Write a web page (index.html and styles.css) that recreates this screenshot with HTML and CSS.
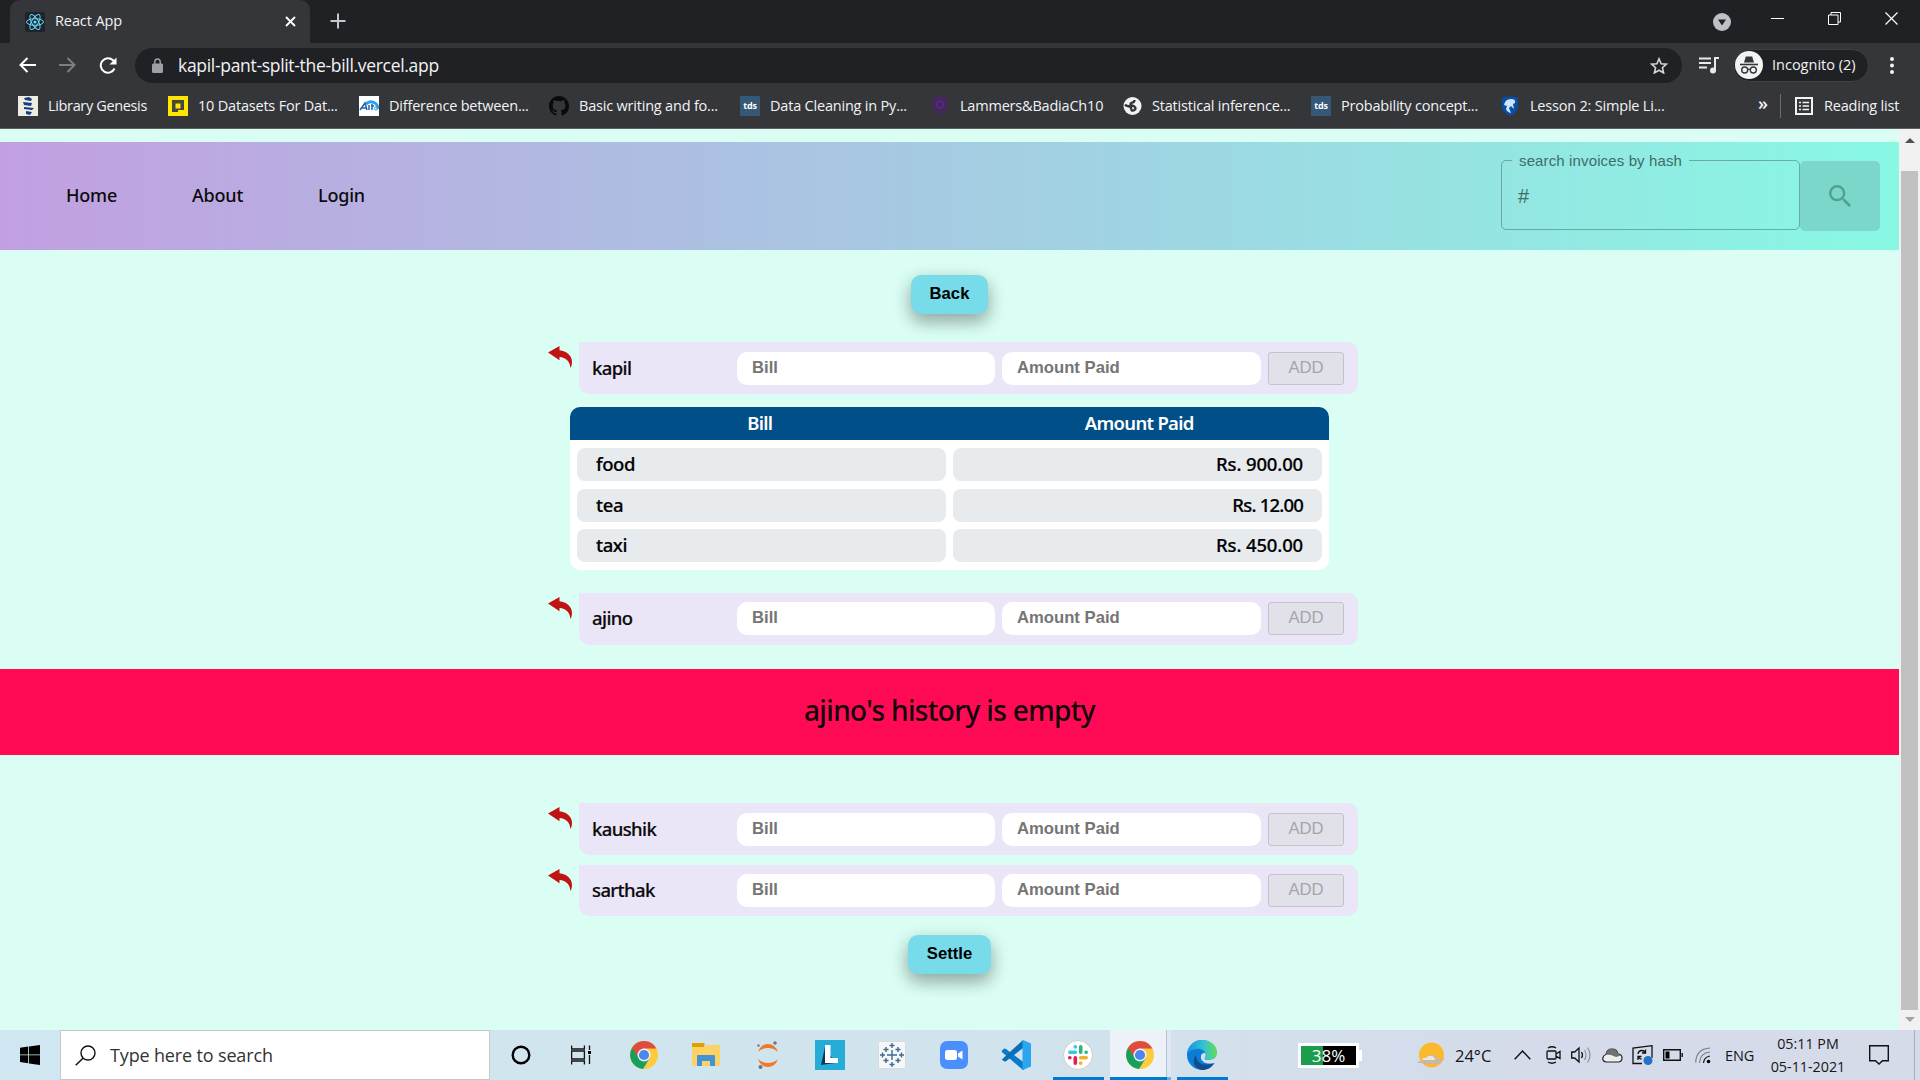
FILE: index.html
```html
<!DOCTYPE html>
<html lang="en">
<head>
<meta charset="utf-8">
<title>React App</title>
<link rel="stylesheet" href="styles.css">
</head>
<body>
<svg class="defs" width="0" height="0">
  <defs>
    <symbol id="reply" viewBox="0 0 24 22"><path fill="#c01313" d="M0 6.500 11.500 0v4.200C18.500 5 24 9.500 24 16c0 2.500-.6 4.500-1.600 6C22 15.500 18 11.500 11.500 11v3.200z"/></symbol>
    <symbol id="chrome" viewBox="0 0 28 28"><circle cx="14" cy="14" r="14" fill="#fdcb3d"/><path fill="#17a05b" d="M1.900 7A14 14 0 0 0 13 27.960L19.600 17.200 14 14z"/><path fill="#de4b40" d="M14 7.500h12.400A14 14 0 0 0 1.900 7l6.300 9z"/><circle cx="14" cy="14" r="6.500" fill="#f5f5f5"/><circle cx="14" cy="14" r="5.100" fill="#4a88f0"/></symbol>
  </defs>
</svg>
<div class="browser">
  <header class="tabs">
    <div class="tab">
      <svg class="favicon" width="20" height="20" viewBox="0 0 20 20"><rect width="20" height="20" rx="2" fill="#20232a"/><g fill="none" stroke="#61dafb" stroke-width="1"><ellipse cx="10" cy="10" rx="8.500" ry="3.300"/><ellipse cx="10" cy="10" rx="8.500" ry="3.300" transform="rotate(60 10 10)"/><ellipse cx="10" cy="10" rx="8.500" ry="3.300" transform="rotate(120 10 10)"/></g><circle cx="10" cy="10" r="1.600" fill="#61dafb"/></svg>
      <span class="tab-title">React App</span>
      <svg width="11" height="11" viewBox="0 0 11 11"><path d="M1 1l9 9M10 1l-9 9" stroke="#fff" stroke-width="1.800"/></svg>
    </div>
    <svg class="new-tab" width="16" height="16" viewBox="0 0 16 16"><path d="M8 .5v15M.5 8h15" stroke="#c4c7cb" stroke-width="2"/></svg>
    <div class="window-controls">
      <svg width="18" height="18" viewBox="0 0 18 18"><circle cx="9" cy="9" r="9" fill="#bdc1c6"/><path d="M5 6.500h8L9 12.500z" fill="#202124"/></svg>
      <svg width="13" height="13" viewBox="0 0 13 13"><path d="M0 6.500h13" stroke="#fff"/></svg>
      <svg width="13" height="13" viewBox="0 0 13 13"><path d="M.5 3h9.500v9.500H.5zM3 3V.5h9.500V10H10" stroke="#fff" fill="none"/></svg>
      <svg width="13" height="13" viewBox="0 0 13 13"><path d="M.5.5l12 12M12.500.5l-12 12" stroke="#fff" stroke-width="1.200"/></svg>
    </div>
  </header>
  <div class="toolbar">
    <svg width="17" height="16" viewBox="0 0 17 16"><path d="M17 8H1.500M8.500 1 1.500 8l7 7" stroke="#fff" stroke-width="2" fill="none"/></svg>
    <svg width="17" height="16" viewBox="0 0 17 16"><path d="M0 8h15.500M8.500 1l7 7-7 7" stroke="#7d7e82" stroke-width="2" fill="none"/></svg>
    <svg width="18" height="17" viewBox="0 0 18 17"><path d="M15.500 11.500A7.200 7.200 0 1 1 14 3.300l2 2" stroke="#fff" stroke-width="2" fill="none"/><path d="M17.500.5v7h-7z" fill="#fff"/></svg>
    <div class="omnibox">
      <svg width="11" height="15" viewBox="0 0 12 15" preserveAspectRatio="none"><path d="M3 6V4a3 3 0 0 1 6 0v2" stroke="#9aa0a6" stroke-width="1.600" fill="none"/><rect y="5.500" width="12" height="9.500" rx="1.500" fill="#9aa0a6"/></svg>
      <span class="url">kapil-pant-split-the-bill.vercel.app</span>
      <svg class="star" width="18" height="17" viewBox="0 0 18 17"><path d="M9 1.800l2.100 4.900 5.300.5-4 3.500 1.200 5.200L9 13.200l-4.600 2.700 1.200-5.200-4-3.500 5.300-.5z" stroke="#d5d7da" stroke-width="1.600" fill="none"/></svg>
    </div>
    <svg class="media" width="20" height="19" viewBox="0 0 20 19"><path d="M0 2.500h12M0 7h12M0 11.500h8M16 14V2h4" stroke="#e8eaed" stroke-width="2" fill="none"/><circle cx="14" cy="14.500" r="3" fill="#e8eaed"/></svg>
    <div class="incognito">
      <svg width="28" height="28" viewBox="0 0 28 28"><circle cx="14" cy="14" r="14" fill="#f1f3f4"/><path d="M9 11.500 10.800 5.500h6.400l1.800 6z" fill="#35363a"/><path d="M5 13.500h18" stroke="#35363a" stroke-width="1.600"/><g fill="none" stroke="#35363a" stroke-width="1.400"><circle cx="9.700" cy="19" r="3"/><circle cx="18.300" cy="19" r="3"/><path d="M12.700 18.500q1.300-.8 2.600 0"/></g></svg>
      <span class="incognito-text">Incognito (2)</span>
    </div>
    <svg class="dots" width="4" height="17" viewBox="0 0 4 17"><g fill="#f1f3f4"><circle cx="2" cy="2" r="2"/><circle cx="2" cy="8.500" r="2"/><circle cx="2" cy="15" r="2"/></g></svg>
  </div>
  <nav class="bookmarks">
    <a class="bookmark"><svg width="20" height="20" viewBox="0 0 20 20"><rect width="20" height="20" fill="#eeeee0"/><path d="M6 2l5-1 3 2-1 2-6-1zM5 6l9 1-1 3-7-1zM6 11l10 1-2 2-8-1zM8 15l6 1-2 3-4-1z" fill="#153b83"/></svg><span class="first-title">Library Genesis</span></a>
    <a class="bookmark"><svg width="20" height="20" viewBox="0 0 20 20"><rect width="20" height="20" fill="#ffe600"/><path d="M4 4h12v10h-6v2H4z" fill="#46473c"/><rect x="7.500" y="7.500" width="5" height="5" fill="#ffe600"/></svg><span>10 Datasets For Dat...</span></a>
    <a class="bookmark"><svg width="20" height="20" viewBox="0 0 20 20"><rect width="20" height="20" fill="#fff"/><path d="M7 8a7 7 0 0 1 12 5" stroke="#2b9ff0" stroke-width="3" fill="none"/><path d="M1 14l5-7 2 7M3 12h4M10 9v5M13 8v6M12 10h3" stroke="#1c65ad" stroke-width="1.500" fill="none"/><circle cx="17" cy="12.500" r="1.600" fill="none" stroke="#2b9ff0"/></svg><span>Difference between...</span></a>
    <a class="bookmark"><svg width="20" height="20" viewBox="0 0 16 16"><path fill="#0a0a0b" d="M8 0C3.580 0 0 3.580 0 8c0 3.540 2.290 6.530 5.470 7.590.4.070.55-.17.55-.38v-1.490c-2.010.37-2.530-.49-2.690-.94-.09-.23-.48-.94-.82-1.130-.28-.15-.68-.52-.01-.53.63-.01 1.080.58 1.230.82.72 1.210 1.870.87 2.330.66.07-.52.28-.87.51-1.070-1.780-.2-3.640-.89-3.640-3.950 0-.87.31-1.590.82-2.150-.08-.2-.36-1.020.08-2.120 0 0 .67-.21 2.200.82a7.600 7.600 0 0 1 4 0c1.530-1.040 2.200-.82 2.200-.82.44 1.100.16 1.920.08 2.120.51.56.82 1.270.82 2.150 0 3.070-1.870 3.750-3.650 3.950.29.25.54.73.54 1.480v2.200c0 .21.15.46.55.38A8 8 0 0 0 16 8c0-4.420-3.580-8-8-8z"/></svg><span>Basic writing and fo...</span></a>
    <a class="bookmark"><i class="tds">tds</i><span>Data Cleaning in Py...</span></a>
    <a class="bookmark"><svg width="20" height="20" viewBox="0 0 20 20"><path d="M3 1.500l3.500-1L10 1.500l3.500-1 3.500 1v10l-1.500 4L10 19.500l-5.500-4-1.500-4z" fill="#452663"/><circle cx="10" cy="8.500" r="3.500" fill="none" stroke="#5d2a80" stroke-width="1.500"/><path d="M4 13l6 4 6-4" fill="none" stroke="#38343f"/></svg><span>Lammers&amp;BadiaCh10</span></a>
    <a class="bookmark"><svg width="20" height="20" viewBox="0 0 20 20"><circle cx="10.500" cy="10" r="9" fill="#f1f3f4"/><path d="M3 8.500c2 2.500 4 1.200 5.500 2.500s0 3 1.500 3.500 4.500-1 3-3.300-5-1.200-4.500-3.200 4-.5 4-4" fill="none" stroke="#35363a" stroke-width="2.400"/></svg><span>Statistical inference...</span></a>
    <a class="bookmark"><i class="tds">tds</i><span>Probability concept...</span></a>
    <a class="bookmark"><svg width="20" height="20" viewBox="0 0 20 20"><path d="M2 1.500q8-2 16 0V12q-2 5-8 8-6-3-8-8z" fill="#0a4ea2"/><path d="M4 9q1-6 7-6 5 0 4 4l-2 1 1 5-3-3-2 2 2 5q-4-1-5-4l1-3z" fill="#cfe5fb"/></svg><span>Lesson 2: Simple Li...</span></a>
    <span class="more">»</span>
    <a class="reading"><svg width="18" height="18" viewBox="0 0 18 18"><rect x="1" y="1" width="16" height="16" fill="none" stroke="#f1f3f4" stroke-width="2"/><path d="M4 5.500h2M4 9h2M4 12.500h2M7.500 5.500H14M7.500 9H14M7.500 12.500H14" stroke="#f1f3f4" stroke-width="1.600"/></svg><span>Reading list</span></a>
  </nav>
</div>
<div class="viewport">
  <main class="page">
    <nav class="site-nav">
      <a>Home</a><a class="about">About</a><a>Login</a>
      <form class="search">
        <fieldset class="field"><legend><span>search invoices by hash</span></legend><span class="hash">#</span></fieldset>
        <div class="search-btn"><svg width="22" height="22" viewBox="3 3 17.500 17.500"><path fill="#539f93" d="M15.500 14h-.79l-.28-.27A6.470 6.470 0 0 0 16 9.500 6.500 6.500 0 1 0 9.500 16c1.610 0 3.090-.59 4.230-1.570l.27.28v.79l5 4.990L20.490 19l-4.990-5zm-6 0C7.010 14 5 11.990 5 9.500S7.010 5 9.500 5 14 7.010 14 9.500 11.990 14 9.500 14z"/></svg></div>
      </form>
    </nav>
    <div class="action back">Back</div>
    <section class="person first"><svg class="reply" width="24" height="22"><use href="#reply"/></svg><div class="row"><span class="name">kapil</span><div class="input">Bill</div><div class="input">Amount Paid</div><div class="add">ADD</div></div></section>
    <section class="history">
      <div class="head"><span>Bill</span><span>Amount Paid</span></div>
      <div class="cells">
        <div class="cell">food</div><div class="cell amount">Rs. 900.00</div>
        <div class="cell">tea</div><div class="cell amount narrow">Rs. 12.00</div>
        <div class="cell">taxi</div><div class="cell amount">Rs. 450.00</div>
      </div>
    </section>
    <section class="person second"><svg class="reply" width="24" height="22"><use href="#reply"/></svg><div class="row"><span class="name">ajino</span><div class="input">Bill</div><div class="input">Amount Paid</div><div class="add">ADD</div></div></section>
    <div class="banner">ajino's history is empty</div>
    <section class="person third"><svg class="reply" width="24" height="22"><use href="#reply"/></svg><div class="row"><span class="name">kaushik</span><div class="input">Bill</div><div class="input">Amount Paid</div><div class="add">ADD</div></div></section>
    <section class="person fourth"><svg class="reply" width="24" height="22"><use href="#reply"/></svg><div class="row"><span class="name">sarthak</span><div class="input">Bill</div><div class="input">Amount Paid</div><div class="add">ADD</div></div></section>
    <div class="action settle">Settle</div>
  </main>
  <div class="scrollbar"><i class="up"></i><i class="thumb"></i><i class="down"></i></div>
</div>
<footer class="taskbar">
  <div class="start"><svg width="20" height="20" viewBox="0 0 20 20"><path d="M0 2.800 8.200 1.600v7.900H0zM9 1.500 20 0v9.500H9zM0 10.300h8.200v8L0 17.100zM9 10.300h11V20L9 18.400z"/></svg></div>
  <div class="task-search"><svg width="21" height="21" viewBox="0 0 21 21"><circle cx="13" cy="8" r="7" fill="none" stroke="#111" stroke-width="1.400"/><path d="M8.200 13 .7 20.300" stroke="#111" stroke-width="1.500"/></svg><span>Type here to search</span></div>
  <div class="apps">
    <div class="app"><svg width="20" height="20"><circle cx="10" cy="10" r="8.300" fill="none" stroke="#000" stroke-width="2.400"/></svg></div>
    <div class="app task-view"><svg width="20" height="20" viewBox="0 0 20 20"><path d="M.6.500V4h12.800V.5M.6 19.500V16h12.800v3.500M.6 6h12.800v8H.6zM18.500.5V5M18.500 10v9" fill="none" stroke="#111" stroke-width="1.300"/><path d="M17 6h3v3h-3z"/></svg></div>
    <div class="app"><svg width="28" height="28"><use href="#chrome"/></svg></div>
    <div class="app"><svg width="28" height="24" viewBox="0 0 28 24"><path d="M0 0h12l1 2h-1l1 3H0z" fill="#e0a000"/><path d="M0 4h12l2-2h14v21H0z" fill="#fdd264"/><path d="M5 23V13q0-1 1-1h16q1 0 1 1v10h-5v-5h-8v5z" fill="#4193d6"/></svg></div>
    <div class="app"><svg width="22" height="28" viewBox="0 0 22 28"><path d="M1 11q3-8 10-8t10 8q-4-4-10-4T1 11zM1 18q3 8 10 8t10-8q-4 4-10 4T1 18z" fill="#f37726"/><g fill="#767677"><circle cx="1.500" cy="4.500" r="1.200"/><circle cx="18" cy="2" r="1.800"/><circle cx="3.500" cy="26" r="2"/></g></svg></div>
    <div class="app"><svg width="30" height="30" viewBox="0 0 30 30"><path fill="#25acd7" d="M0 0h30v30H0z"/><path fill="#0e3958" d="M10 7 6 25l14-2z"/><path fill="#fff" d="M10 5h5.500v13H23v5H10z"/></svg></div>
    <div class="app"><svg width="28" height="28" viewBox="0 0 28 28"><path fill="#f7f7f7" stroke="#d7dade" d="M.5.500h27v27H.5z"/><path d="M14 9v10M9 14h10M14 2v5M11.500 4.500h5M14 21v5M11.500 23.500h5M4.500 11.500v5M2 14h5M23.500 11.500v5M21 14h5M8 6v5M5.500 8.500h5M20 6v5M17.500 8.500h5M8 17v5M5.500 19.500h5M20 17v5M17.500 19.500h5" stroke="#3a6c96" stroke-width="1.400"/></svg></div>
    <div class="app"><svg width="28" height="28" viewBox="0 0 28 28"><rect width="28" height="28" rx="7" fill="#4b8ffd"/><rect x="5" y="9" width="12" height="10" rx="2.500" fill="#fff"/><path d="M18 12.500 22.500 9.500v9L18 15.500z" fill="#fff"/></svg></div>
    <div class="app"><svg width="30" height="30" viewBox="0 0 30 30"><path d="M.8 10.500 3 8.700q1-.6 2 .2L23 22.500V30h-1L.8 12z" fill="#0b7bc9"/><path d="M.8 19.500 22 0v8L5 21.200q-1 .7-2 0L.8 19.500z" fill="#0a6fb8"/><path d="M22 0l8 3.500v23L22 30q-.500 0-.500-1V1q0-1 .500-1z" fill="#2aa5ef"/></svg></div>
    <div class="app open"><svg width="30" height="30" viewBox="0 0 30 30"><circle cx="15" cy="15" r="14.500" fill="#fff" stroke="#ccc"/><g stroke-width="3.600" stroke-linecap="round"><path d="M12.300 6.800v.1M6.800 12.300h5.500" stroke="#36c5f0"/><path d="M17.700 6.800v5.500M23.200 12.300h-.1" stroke="#2eb67d"/><path d="M17.700 17.700h5.500M17.700 23.200v-.1" stroke="#ecb22e"/><path d="M12.300 17.700v5.500M6.800 17.700h.1" stroke="#e01e5a"/></g></svg></div>
    <div class="app open active"><svg width="28" height="28"><use href="#chrome"/></svg></div>
    <div class="app open"><svg width="30" height="30" viewBox="0 0 30 30"><defs><linearGradient id="e1" x2="1"><stop stop-color="#1595dd"/><stop offset=".55" stop-color="#35c1d5"/><stop offset="1" stop-color="#65dc58"/></linearGradient></defs><circle cx="15" cy="15" r="15" fill="#0b7dd6"/><path d="M0 14C1 5 8 0 15 0c9 0 15 6 15 12 0 5-4 8-9 8-3 0-4-1-3-3 2-5-3-9-8-8-5 0-9 3-10 5z" fill="url(#e1)"/><path d="M9 15c0 8 7 12 18 8-3 5-7 7-12 7C8 29 4 22 9 15z" fill="#134b8c"/><path d="M30 13v12l-3-2c-7 2-14-1-13-7 0-2 2-3 3-3 2 0 2 2 1 4-1 3 1 3 3 3 5 0 8-2 9-7z" fill="#d3e1ed"/></svg></div>
  </div>
  <div class="battery-meter"><span>38%</span></div>
  <div class="weather"><svg width="30" height="26" viewBox="0 0 30 26"><circle cx="15.500" cy="13" r="12.500" fill="#fbb92c"/><path d="M1 21q1-2 5-2 1-4 5-4 2-3 6-2 4 0 5 4h7q-2 2-6 2l3 2q-7 2-12 1-5 1-8-1z" fill="#c9b7a6"/><path d="M6 18q1-3 4-2 2-3 6-2 3 1 3 4z" fill="#eee6dd"/></svg><span class="temp">24°C</span></div>
  <div class="tray">
    <svg width="17" height="10" viewBox="0 0 17 10"><path d="M.7 9.200 8.500 1l7.800 8.200" fill="none" stroke="#111" stroke-width="1.400"/></svg>
    <svg width="16" height="18" viewBox="0 0 16 18"><path d="M2 2q4-2.500 8 0M2 16q4 2.500 8 0M1 6q0-1 1-1h7q1 0 1 1v6q0 1-1 1H2q-1 0-1-1zM10 8l4-2.500v7L10 10" fill="none" stroke="#111" stroke-width="1.300"/></svg>
    <svg width="21" height="18" viewBox="0 0 21 18"><path d="M.7 6h3L8 2v14l-4.300-4h-3zM10.500 6q2 3 0 6" fill="none" stroke="#111" stroke-width="1.300"/><path d="M13.500 4q3 5 0 10M16.500 1.500q5 7.500 0 15" fill="none" stroke="#8a929a" stroke-width="1.200"/></svg>
    <svg width="21" height="15" viewBox="0 0 21 15"><path d="M4 14Q0 13 1 9.500 1.500 7 4 6.500 5 1 10 1t6 5q4 0 4 4t-4 4z" fill="#eee" stroke="#222" stroke-width="1.200"/><path d="M4 6.500Q5 1 10 1t6 5q2 0 3 1.500L14 9 9 7z" fill="#707070"/></svg>
    <svg width="21" height="20" viewBox="0 0 21 20"><path d="M10 18.500H1V3L20 .7v12M6 9q.5-3.500 4-3.500 2 0 3 2M13.500 4.500V8H10M6 15v-3.500h3.500M6.500 12q1 2 3 2" fill="none" stroke="#111" stroke-width="1.300"/><circle cx="16" cy="15.500" r="4.500" fill="#2472c2"/></svg>
    <svg width="20" height="12" viewBox="0 0 20 12"><path d="M.7.7h16.600v10.600H.7zM19.200 4v4" fill="none" stroke="#111" stroke-width="1.400"/><path d="M2.500 2.500h4v7h-4z"/></svg>
    <svg width="16" height="17" viewBox="0 0 16 17"><path d="M.7 15.500Q1 2 15 1M4.500 16Q5 6 15 5" fill="none" stroke="#777f88" stroke-width="1.200"/><path d="M8.500 16q.5-6 6.500-7" fill="none" stroke="#111" stroke-width="1.200"/><circle cx="13.500" cy="14.500" r="1.800"/></svg>
    <span class="lang">ENG</span>
  </div>
  <div class="clock"><span>05:11 PM</span><span>05-11-2021</span></div>
  <svg class="notice" width="20" height="20" viewBox="0 0 20 20"><path d="M.7.700h18.600v15H13.500L10 19l-3.500-3.300H.7z" fill="none" stroke="#111" stroke-width="1.400"/></svg>
  <div class="show-desktop"></div>
</footer>
</body>
</html>
```
FILE: styles.css
```css
* { box-sizing: border-box; }
body { margin: 0; width: 1920px; height: 1080px; overflow: hidden; font-family: "Open Sans", sans-serif; display: flex; flex-direction: column; }
svg { display: block; flex: none; }
span { white-space: nowrap; }
.defs { position: absolute; }

/* Browser window frame */
.browser { height: 129px; background: #35363a; border-bottom: 1px solid #5d5e62; color: #f1f3f4; font-size: 14.500px; }
.tabs { height: 43px; background: #202124; display: flex; padding-left: 10px; }
.tab { width: 300px; height: 43px; border-radius: 10px 10px 0 0; background: #35363a; display: flex; align-items: center; padding: 0 14px 0 15px; }
.tab-title { margin: 0 0 2px 10px; flex: 1; letter-spacing: -.1px; }
.new-tab { margin: 13px 0 0 20px; }
.window-controls { margin-left: auto; display: flex; align-items: center; height: 37px; padding-right: 22px; gap: 44px; }
.window-controls svg:first-child { margin: 6px -4px 0 0; }
.toolbar { height: 44px; display: flex; align-items: center; padding-left: 19px; }
.toolbar > svg:nth-child(2), .toolbar > svg:nth-child(3) { margin-left: 23px; }
.omnibox { width: 1547px; height: 35px; border-radius: 18px; background: #202124; display: flex; align-items: center; margin-left: 18px; padding: 0 14px 0 17px; }
.url { margin-left: 15px; font-size: 17.500px; letter-spacing: -.31px; flex: 1; }
.media { margin-left: 17px; }
.incognito { width: 136px; height: 33px; border-radius: 17px; border: 1px solid #404145; background: #202124; display: flex; align-items: center; margin-left: 14px; padding-left: 1px; }
.incognito-text { margin: 0 0 2px 9px; }
.dots { margin-left: 21px; }
.bookmarks { height: 38px; display: grid; grid-template-columns: 150px 191px 190px 191px 190px 192px 189px 189px 258px 18px auto; align-items: center; padding-left: 18px; letter-spacing: -.2px; }
.bookmark, .reading { display: flex; align-items: center; gap: 10px; }
.bookmark span, .reading span { padding-bottom: 2px; }
.first-title { letter-spacing: -.35px; }
.tds { width: 20px; height: 20px; background: #355876; color: #fff; font: bold 9px/19px "Open Sans", sans-serif; text-align: center; }
.more { font-size: 18px; line-height: 18px; padding-bottom: 6px; font-weight: 600; }
.reading { border-left: 1px solid #6b6c70; height: 24px; margin-left: 4px; padding-left: 14px; gap: 11px; }

/* Site */
.viewport { height: 901px; display: flex; background: #dafef4; }
.page { width: 1899px; padding-top: 13px; font-family: "Noto Sans", sans-serif; font-weight: 500; color: #0b0b0b; }
.site-nav { height: 108px; background: linear-gradient(90deg, #c29fe1, #88f8e3); display: flex; align-items: center; padding: 0 19px 0 66px; font-size: 18px; letter-spacing: -.2px; }
.site-nav a { width: 126px; padding-bottom: 3px; }
.search { display: flex; margin-left: auto; font-family: "Liberation Sans", sans-serif; font-weight: 400; letter-spacing: 0; }
.field { width: 299px; height: 78px; margin: -9px 0 0; padding: 0 0 0 16px; border: 1px solid rgba(0,0,0,.28); border-radius: 5px; min-width: 0; color: #3d6e68; }
.field legend { padding: 0 7px; margin-left: -6px; font-size: 15px; line-height: 17px; letter-spacing: .13px; }
.hash { font-size: 20px; line-height: 23px; display: block; margin-top: 16px; }
.search-btn { width: 80px; height: 70px; border-radius: 5px; background: #7ad7c9; display: flex; align-items: center; justify-content: center; }
.action { height: 39px; border-radius: 10px; background: #78dbe9; color: #000; font: bold 16.670px/38px "Liberation Sans", sans-serif; text-align: center; box-shadow: 0 8px 16px rgba(0,0,0,.2), 0 6px 20px rgba(0,0,0,.19); }
.back { width: 77px; margin: 25px 0 0 911px; }
.settle { width: 83px; margin: 19px 0 0 908px; }
.person { display: flex; padding-left: 548px; }
.reply { margin: 4px 7px 0 0; }
.row { width: 779px; height: 52px; background: #eae6f7; border-radius: 0 10px 10px 10px; padding: 0 13px; display: grid; grid-template-columns: 138px 258px 259px 76px; column-gap: 7px; align-items: center; }
.first { margin-top: 28px; }
.second { margin-top: 23px; }
.third { margin-top: 48px; }
.fourth { margin-top: 10px; }
.first .row, .third .row { padding-top: 1px; }
.second .row { padding-bottom: 1px; }
.fourth .row { height: 51px; }
.name { font-size: 18.500px; letter-spacing: -.6px; padding-bottom: 2px; -webkit-text-stroke: .2px; }
.input { height: 33px; border-radius: 10px; background: #fff; font: bold 16.670px/32px "Liberation Sans", sans-serif; color: #757575; padding-left: 15px; }
.add { height: 33px; border: 1px solid #c4c3cb; border-radius: 3px; background: #e1e1e9; color: #a5a5aa; font: 16.670px/30px "Liberation Sans", sans-serif; text-align: center; }
.history { margin: 13px 0 0 570px; width: 759px; height: 163px; border-radius: 10px; background: #fff; overflow: hidden; font-size: 18.500px; letter-spacing: -.4px; }
.head { height: 33px; background: #004f88; color: #fff; font-weight: 600; display: grid; grid-template-columns: 1fr 1fr; text-align: center; line-height: 31px; letter-spacing: -.7px; }
.cells { display: grid; grid-template-columns: 369px 369px; grid-auto-rows: 33px; gap: 7.500px 7px; padding: 8px 7px; }
.cell { background: #e8ebee; border-radius: 8px; padding: 0 19px; line-height: 31px; color: #000; -webkit-text-stroke: .2px; }
.amount { text-align: right; letter-spacing: -.15px; }
.narrow { letter-spacing: -.8px; }
.banner { margin-top: 24px; height: 86px; background: #ff0b55; font-size: 28px; letter-spacing: -.65px; line-height: 83px; text-align: center; color: #14020a; }
.scrollbar { width: 21px; background: #f1f1f1; display: flex; flex-direction: column; align-items: center; padding-top: 9px; }
.up { border: 5px solid transparent; border-top: 0; border-bottom-color: #505050; }
.thumb { width: 17px; height: 839px; background: #c1c1c1; margin-top: 28px; }
.down { border: 5px solid transparent; border-bottom: 0; border-top-color: #a3a3a3; margin-top: 7px; }

/* Desktop taskbar */
.taskbar { height: 50px; background: linear-gradient(90deg, #d0e6f0, #d1e4ee 50%, #d5dbea 80%, #d6dbea); display: flex; align-items: center; color: #161616; font-size: 16px; }
.start { width: 60px; padding-left: 20px; }
.task-search { width: 430px; height: 50px; border: 1px solid #c8c8c8; background: #fff; display: flex; align-items: center; padding-left: 14px; gap: 14px; font-size: 18px; letter-spacing: -.15px; color: #333; }
.apps { display: flex; }
.app { width: 62px; height: 50px; display: flex; align-items: center; justify-content: center; }
.app:first-child { width: 61px; }
.task-view { padding-right: 3px; }
.open { background: linear-gradient(#0078d7, #0078d7) center bottom / 51px 3px no-repeat; }
.active { background: linear-gradient(90deg, #0078d7 57px, #66aee7 57px) 1px bottom / 61px 3px no-repeat, linear-gradient(90deg, transparent 1px, #ecf2f8 1px 57px, #b4c3d3 57px 58px, #dfe8f1 58px); }
.battery-meter { position: relative; width: 61px; height: 25px; margin-left: 65px; border: 3px solid #fff; background: linear-gradient(90deg, #1b9e4b 40%, #000 40%); color: #fff; font-size: 17px; line-height: 19px; text-align: center; }
.battery-meter::after { content: ""; position: absolute; right: -6px; top: 4px; width: 3px; height: 11px; background: #fff; }
.weather { width: 155px; margin-left: 57px; padding-right: 0; display: flex; align-items: center; gap: 9px; width: 98px; }
.temp { font-size: 16.500px; }
.tray { display: grid; grid-template-columns: 32px 25px 31px 30px 31px 32px 30px 30px; align-items: center; width: 241px; }
.lang { font-size: 14.500px; letter-spacing: -.1px; }
.clock { width: 80px; margin-left: 13px; display: flex; flex-direction: column; align-items: center; font-size: 14.300px; line-height: 23px; }
.notice { margin-left: 21px; }
.show-desktop { width: 1px; height: 50px; background: #a9b0bd; margin-left: 25px; }
```
